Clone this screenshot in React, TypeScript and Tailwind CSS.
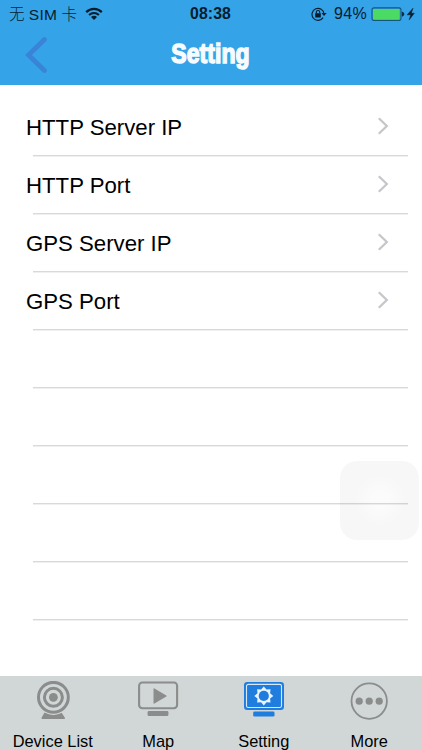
import React from "react";

const settings = ["HTTP Server IP", "HTTP Port", "GPS Server IP", "GPS Port"];
const emptyRows = [0, 1, 2, 3, 4];

function StatusBar() {
  return (
    <div className="flex h-[28px] items-center justify-between pl-[9px] pr-[6px] text-[#071c2c]">
      <div className="flex w-[150px] items-center">
        <span className="pt-px text-[15.5px] leading-[28px] whitespace-pre">
          <span className="font-light">无</span> <span className="tracking-[0.3px]">SIM</span> <span className="font-light">卡</span>
        </span>
        <svg className="ml-[8px]" width="18" height="14" viewBox="0 0 18 14" fill="none" stroke="currentColor">
          <path d="M1.2 5.1C5.6 .7 12.4 .7 16.8 5.1" strokeWidth="2.2" />
          <path d="M4.1 8C6.9 5.2 11.1 5.2 13.9 8" strokeWidth="2" />
          <path d="M9 13.1L6 10.1C7.7 8.4 10.3 8.4 12 10.1Z" fill="currentColor" stroke="none" />
        </svg>
      </div>
      <span className="mr-[4px] text-[15.8px] leading-[28px] font-bold tracking-[0.1px]">08:38</span>
      <div className="flex w-[150px] items-center justify-end">
        <svg width="16" height="14" viewBox="0 0 16 14" fill="none" stroke="currentColor">
          <path d="M12.1 10.6A6 6 0 1 1 13 7" strokeWidth="1.1" />
          <path d="M10.5 6H15.6L13 9Z" fill="currentColor" stroke="none" />
          <rect x="4.2" y="6.3" width="5.6" height="4.2" rx=".5" fill="currentColor" stroke="none" />
          <path d="M5.3 6.5V5.2a1.7 1.7 0 0 1 3.4 0v1.3" strokeWidth="1.1" />
        </svg>
        <span className="ml-[7px] text-[16px] leading-[28px] tracking-[0.35px]">94%</span>
        <svg className="ml-[4px]" width="45" height="14" viewBox="0 0 45 14">
          <rect x="1" y=".9" width="29" height="12.6" rx="2" fill="#35a3e8" stroke="#14567c" strokeWidth="1.1" />
          <rect x="2" y="1.9" width="26.5" height="10.6" rx="1" fill="#4bda64" />
          <path d="M31.3 5.1c2 .4 2 3.7 0 4.1Z" fill="currentColor" stroke="currentColor" strokeWidth=".7" />
          <path d="M42 1.2L36.2 7.8H39.8L38.2 12.8L43.3 6.2H40.2Z" fill="currentColor" stroke="currentColor" strokeWidth=".5" />
        </svg>
      </div>
    </div>
  );
}

function WebcamIcon() {
  return (
    <svg width="36" height="42" viewBox="0 0 36 42" fill="none" stroke="#8b8c8c">
      <path d="M9.5 31.5H26.5L29.9 36.7Q30.4 38 29 38H7.5Q6.1 38 6.6 36.7Z" fill="#8b8c8c" stroke="none" />
      <circle cx="18.4" cy="16.3" r="17.6" fill="#d1d7d7" stroke="none" />
      <circle cx="18.4" cy="16.3" r="14.9" strokeWidth="3" />
      <circle cx="18.4" cy="16.3" r="9" strokeWidth="3" />
      <circle cx="18.4" cy="16.3" r="4.4" fill="#8b8c8c" stroke="none" />
    </svg>
  );
}

function PlayerIcon() {
  return (
    <svg width="42" height="42" viewBox="0 0 42 42" fill="none">
      <rect x="2.1" y="1.5" width="38" height="25.8" rx="3.2" stroke="#8b8c8c" strokeWidth="2.1" />
      <path d="M17.1 7.9V22.1L29 15Z" fill="#8b8c8c" stroke="#8b8c8c" strokeWidth="1.2" strokeLinejoin="round" />
      <rect x="10.6" y="30" width="20.8" height="5" rx="1.3" fill="#8b8c8c" />
    </svg>
  );
}

function SettingIcon() {
  return (
    <svg width="42" height="42" viewBox="0 0 42 42" fill="none">
      <rect x="1" y="1" width="40" height="28" rx="3.3" fill="#207de0" />
      <rect x="3.5" y="3.4" width="35" height="23.1" rx="1.8" stroke="#d7e8f8" strokeWidth="1.1" />
      <path d="M20.8 5.4L23.5 8.6L27.5 8.2L27.1 12.2L30.3 14.9L27.1 17.6L27.5 21.6L23.5 21.2L20.8 24.4L18.1 21.2L14.1 21.6L14.5 17.6L11.3 14.9L14.5 12.2L14.1 8.2L18.1 8.6Z" fill="#e9f3fb" />
      <circle cx="20.8" cy="14.9" r="5.1" fill="#207de0" />
      <rect x="10.2" y="30.4" width="21.3" height="5.1" rx="1.3" fill="#207de0" />
    </svg>
  );
}

function MoreIcon() {
  return (
    <svg width="40" height="42" viewBox="0 0 40 42" fill="none">
      <circle cx="20.2" cy="20.1" r="17.7" stroke="#8b8c8c" strokeWidth="1.8" />
      <circle cx="10.2" cy="20.2" r="3.6" fill="#8b8c8c" />
      <circle cx="20.2" cy="20.2" r="3.6" fill="#8b8c8c" />
      <circle cx="30.2" cy="20.2" r="3.6" fill="#8b8c8c" />
    </svg>
  );
}

const tabs = [
  { label: "Device List", icon: <WebcamIcon /> },
  { label: "Map", icon: <PlayerIcon /> },
  { label: "Setting", icon: <SettingIcon /> },
  { label: "More", icon: <MoreIcon /> },
];

function Separator() {
  return <div className="mr-[14px] ml-[33px] h-[2px] border-b border-[#efeff0] bg-[#d9d9da]" />;
}

export default function App() {
  return (
    <div className="relative flex h-[750px] w-[422px] flex-col overflow-hidden bg-white font-['Liberation_Sans','Noto_Sans_CJK_SC',sans-serif] text-black">
      <header className="h-[85px] shrink-0 bg-[#35a3e8]">
        <StatusBar />
        <div className="grid h-[57px] grid-cols-[80px_1fr_80px] items-center">
          <button aria-label="Back" className="pl-[25px]">
            <svg className="-mt-[3px]" width="24" height="38" viewBox="0 0 24 38" fill="none">
              <path d="M19.5 3.5L3.5 19L19.5 34.5" stroke="#3984d7" strokeWidth="4.8" strokeLinecap="round" />
            </svg>
          </button>
          <h1 className="-mt-[5px] -ml-[1px] scale-x-[.84] text-center text-[27.5px] leading-[40px] font-bold whitespace-nowrap text-[#f7fbfe] [-webkit-text-stroke:1.5px_#f7fbfe]">Setting</h1>
        </div>
      </header>
      <main className="flex-1 pt-[13px]">
        {settings.map((name) => (
          <div key={name} className="h-[58px]">
            <div className="flex h-[57px] items-center justify-between pr-[32px] pl-[26px]">
              <span className="pt-[2px] text-[22.2px] leading-[30px]">{name}</span>
              <svg className="-mt-px" width="14" height="20" viewBox="0 0 14 20" fill="none">
                <path d="M2.8 2.2L10.8 10L2.8 17.8" stroke="#c7c7cb" strokeWidth="2.3" />
              </svg>
            </div>
            <Separator />
          </div>
        ))}
        {emptyRows.map((row) => (
          <div key={row} className="h-[58px] pt-[57px]">
            <Separator />
          </div>
        ))}
      </main>
      <div className="absolute top-[461px] left-[340px] h-[79px] w-[79px] rounded-[17px] bg-[radial-gradient(circle,rgba(0,0,0,0.016)_15%,rgba(0,0,0,0.03)_45%)]" />
      <nav className="grid h-[74px] shrink-0 grid-cols-4 bg-[#d1d7d7]">
        {tabs.map((tab) => (
          <button key={tab.label} className="flex flex-col items-center pt-[5px]">
            {tab.icon}
            <span className="mt-[8px] text-[16.4px] leading-[20px] whitespace-nowrap">{tab.label}</span>
          </button>
        ))}
      </nav>
    </div>
  );
}
